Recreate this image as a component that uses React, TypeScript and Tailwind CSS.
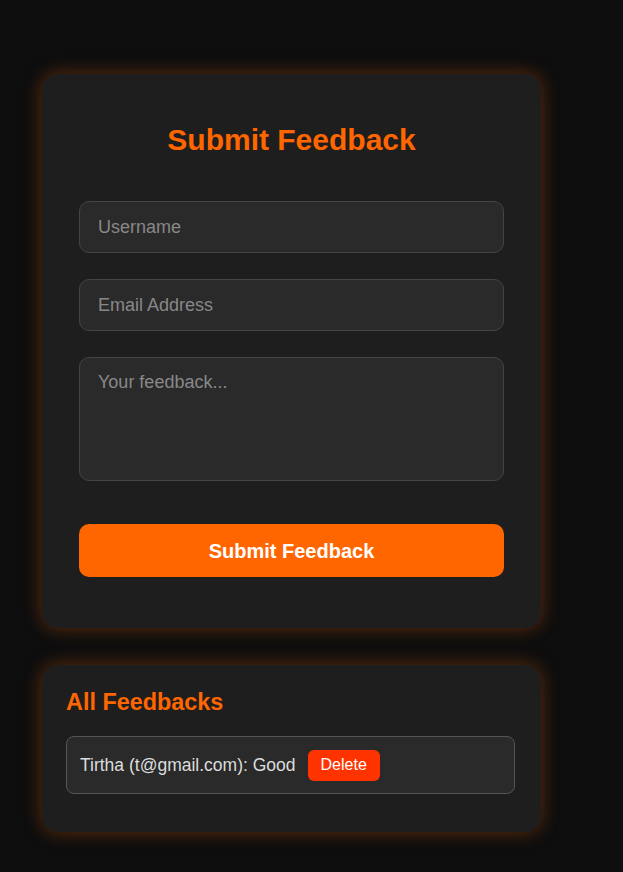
import React, { useState } from "react";

function App() {
  const [feedbacks] = useState([
    { name: "Tirtha", email: "t@gmail.com", text: "Good" },
  ]);

  return (
    <div className="min-h-[872px] w-full bg-[#0e0e0e] pt-[74px] pb-10 pl-[42px] font-['Liberation_Sans',Arial,sans-serif]">
      {/* Form card */}
      <div className="w-[499px] rounded-2xl bg-[#1e1e1e] px-[37px] pt-[48px] pb-[51px] shadow-[0_0_18px_rgba(255,102,0,0.35)]">
        <h2 className="text-center text-[30px] font-bold leading-[35px] text-[#ff6600]">
          Submit Feedback
        </h2>
        <div className="mt-[44px] flex flex-col gap-[26px]">
          <input
            type="text"
            placeholder="Username"
            className="h-[52px] w-full rounded-[10px] border border-[#444] bg-[#2a2a2a] px-[18px] text-[18px] text-[#ddd] outline-none placeholder:text-[#888]"
          />
          <input
            type="email"
            placeholder="Email Address"
            className="h-[52px] w-full rounded-[10px] border border-[#444] bg-[#2a2a2a] px-[18px] text-[18px] text-[#ddd] outline-none placeholder:text-[#888]"
          />
          <textarea
            placeholder="Your feedback..."
            className="h-[124px] w-full resize-none rounded-[10px] border border-[#444] bg-[#2a2a2a] px-[18px] py-[11px] text-[18px] text-[#ddd] outline-none placeholder:text-[#888]"
          />
        </div>
        <button className="mt-[43px] h-[53px] w-full rounded-[10px] bg-[#ff6600] text-[20px] font-bold text-white">
          Submit Feedback
        </button>
      </div>

      {/* List card */}
      <div className="mt-[37px] w-[499px] rounded-2xl bg-[#1e1e1e] pl-6 pr-[26px] pt-[24px] pb-[38px] shadow-[0_0_18px_rgba(255,102,0,0.35)]">
        <h3 className="text-[23.4px] font-bold leading-[27px] text-[#ff6600]">
          All Feedbacks
        </h3>
        <div className="mt-[20px] flex flex-col gap-3">
          {feedbacks.map((f) => (
            <div
              key={f.email}
              className="flex h-[58px] items-center gap-[12px] rounded-lg border border-[#555] bg-[#2a2a2a] px-[13px]"
            >
              <span className="text-[17.5px] text-[#ddd]">
                {f.name} ({f.email}): {f.text}
              </span>
              <button className="h-[31px] rounded-md bg-[#ff3300] px-[13px] text-[16px] text-white">
                Delete
              </button>
            </div>
          ))}
        </div>
      </div>
    </div>
  );
}

export default App;
